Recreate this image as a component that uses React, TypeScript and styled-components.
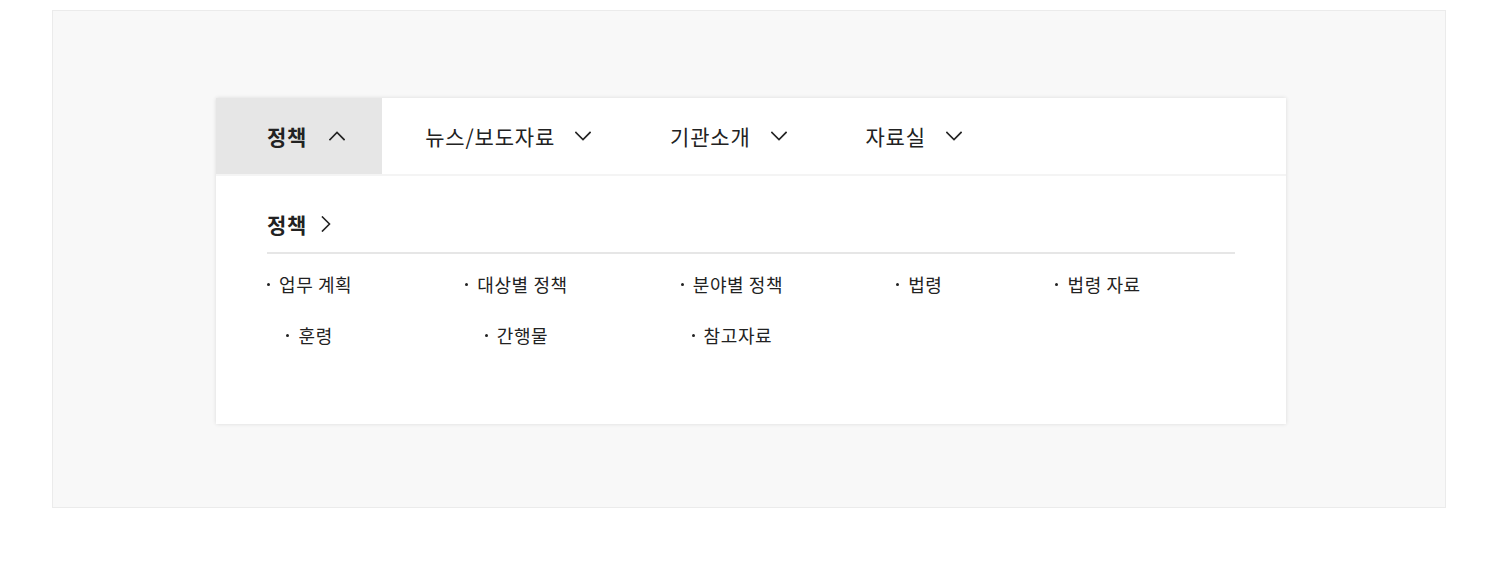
import React from "react";
import styled, { createGlobalStyle } from "styled-components";

const GlobalStyle = createGlobalStyle`
  body {
    margin: 0;
    background: #fff;
    font-family: "Noto Sans CJK KR", "Noto Sans", sans-serif;
    color: #222;
  }
`;

const Frame = styled.div`
  box-sizing: border-box;
  margin: 10px 52px 0;
  height: 498px;
  padding-top: 87px;
  background: #f8f8f8;
  border: 1px solid #ebebeb;
`;

const Card = styled.div`
  box-sizing: border-box;
  width: 1070px;
  height: 326px;
  margin-left: 163px;
  background: #fff;
  box-shadow: 0 0 4px rgba(0, 0, 0, 0.12);
`;

const TabBar = styled.div`
  display: flex;
  height: 76px;
  border-bottom: 2px solid #f4f4f4;
`;

const Tab = styled.button<{ $active?: boolean; $first?: boolean }>`
  display: flex;
  align-items: center;
  gap: ${(p) => (p.$first ? "22px" : "20px")};
  height: 100%;
  padding: 0 ${(p) => (p.$first ? "37px" : "36px")} 0 ${(p) => (p.$first ? "51px" : "43px")};
  border: none;
  background: ${(p) => (p.$active ? "#e6e6e6" : "transparent")};
  font-family: inherit;
  font-size: 21px;
  letter-spacing: 0.8px;
  font-weight: ${(p) => (p.$active ? 700 : 400)};
  color: #222;
  cursor: pointer;
`;

const Panel = styled.div`
  padding: 33px 51px 0 51px;
`;

const Heading = styled.h3`
  display: flex;
  align-items: center;
  gap: 11px;
  margin: 0;
  height: 30px;
  padding-bottom: 13px;
  border-bottom: 2px solid #e6e6e6;
  font-size: 21px;
  letter-spacing: 0.8px;
  font-weight: 700;
  line-height: 29px;
`;

const LinkGrid = styled.ul`
  display: grid;
  grid-template-columns: repeat(5, auto);
  justify-content: start;
  justify-items: center;
  column-gap: 113px;
  row-gap: 27px;
  margin: 18px 0 0;
  padding: 0;
  list-style: none;
`;

const LinkItem = styled.li`
  display: flex;
  align-items: center;
  font-size: 18px;
  letter-spacing: 0.6px;
  line-height: 24px;
  color: #222;
  white-space: nowrap;

  &::before {
    content: "";
    width: 3px;
    height: 3px;
    margin-right: 9px;
    border-radius: 50%;
    background: #222;
  }
`;

const Chevron = ({ dir }: { dir: "up" | "down" | "right" }) => {
  const pts =
    dir === "up"
      ? "1,11.5 8,4.5 15,11.5"
      : dir === "down"
      ? "1,4.5 8,11.5 15,4.5"
      : "4.5,1 11.5,8 4.5,15";
  return (
    <svg width="16" height="16" viewBox="0 0 16 16" fill="none">
      <polyline points={pts} stroke="#222" strokeWidth="1.6" strokeLinecap="square" />
    </svg>
  );
};

const tabs = ["정책", "뉴스/보도자료", "기관소개", "자료실"];
const links = ["업무 계획", "대상별 정책", "분야별 정책", "법령", "법령 자료", "훈령", "간행물", "참고자료"];

const App = () => {
  return (
    <>
      <GlobalStyle />
      <Frame>
        <Card>
          <TabBar>
            {tabs.map((t, i) => (
              <Tab key={t} $active={i === 0} $first={i === 0}>
                {t}
                <Chevron dir={i === 0 ? "up" : "down"} />
              </Tab>
            ))}
          </TabBar>
          <Panel>
            <Heading>
              정책
              <Chevron dir="right" />
            </Heading>
            <LinkGrid>
              {links.map((l) => (
                <LinkItem key={l}>{l}</LinkItem>
              ))}
            </LinkGrid>
          </Panel>
        </Card>
      </Frame>
    </>
  );
};

export default App;
